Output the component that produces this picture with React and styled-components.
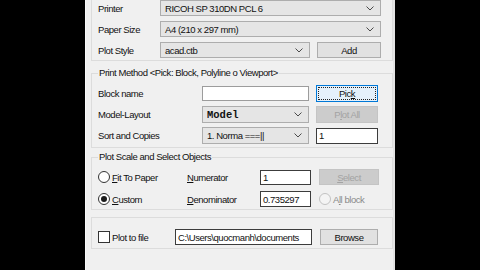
import styled, { createGlobalStyle, css } from 'styled-components';

const GlobalStyle = createGlobalStyle`
  html, body {
    margin: 0;
    padding: 0;
    background: #000;
  }
`;

const Screen = styled.div`
  height: 270px;
  display: flex;
  justify-content: center;
  background: #000;
  overflow: hidden;
`;

const Dialog = styled.div`
  width: 310px;
  height: 270px;
  box-sizing: border-box;
  overflow: hidden;
  background: #f0f0f0;
  border-left: 1px solid #f9f9f9;
  border-right: 2px solid #e4e4e4;
  padding-left: 5px;
  display: flex;
  flex-direction: column;
  font-family: 'Liberation Sans', Arial, sans-serif;
  font-size: 9.5px;
  letter-spacing: -0.45px;
  color: #111;
`;

const TopGroup = styled.div`
  margin-top: -10px;
  border: 1px solid #dcdcdc;
  padding: 9px 11px 2px 6px;
  display: grid;
  grid-template-columns: 55px 150px 64px;
  grid-auto-rows: 16px;
  column-gap: 7px;
  row-gap: 5px;
  align-items: center;
`;

const Group = styled.fieldset`
  margin: ${p => p.$gap}px 0 0;
  border: 1px solid #dcdcdc;
  padding: ${p => p.$pad};
  min-inline-size: 0;
  display: grid;
  grid-template-columns: ${p => p.$cols};
  grid-auto-rows: ${p => p.$row}px;
  row-gap: ${p => p.$rowGap}px;
  align-items: center;
`;

const Title = styled.legend`
  padding: 0 1px;
  line-height: 12px;
`;

const Label = styled.span`
  white-space: nowrap;
`;

const Key = styled.u`
  text-underline-offset: 1px;
`;

const Combo = styled.div`
  height: ${p => p.$h || 16}px;
  box-sizing: border-box;
  border: 1px solid #adadad;
  background: #e5e5e5;
  display: flex;
  align-items: center;
  justify-content: space-between;
  padding: 0 6px 0 4px;
  white-space: nowrap;
  grid-column: span ${p => p.$span || 1};
`;

const MonoValue = styled.span`
  font-family: 'Liberation Mono', 'Courier New', monospace;
  font-weight: bold;
  font-size: 10.5px;
  letter-spacing: 0;
`;

const TextBox = styled.div`
  height: ${p => p.$h || 15}px;
  box-sizing: border-box;
  border: 1px solid ${p => (p.$dark ? '#3c3c3c' : '#9c9c9c')};
  background: #fff;
  display: flex;
  align-items: center;
  padding: 0 2px;
  white-space: nowrap;
  overflow: hidden;
  grid-column: span ${p => p.$span || 1};
`;

const Button = styled.button`
  all: unset;
  height: ${p => p.$h || 16}px;
  box-sizing: border-box;
  border: 1px solid #adadad;
  background: #e1e1e1;
  display: flex;
  align-items: center;
  justify-content: center;
  font: inherit;
  letter-spacing: inherit;
  color: #111;
  ${p => p.$disabled && css`
    background: #cccccc;
    border-color: #c4c4c4;
    color: #a3a3a3;
  `}
  ${p => p.$focused && css`
    background: #e5f1fb;
    border-color: #0078d7;
    outline: 1px dotted #222;
    outline-offset: -3px;
  `}
`;

const Choice = styled.label`
  display: flex;
  align-items: center;
  gap: 2px;
  white-space: nowrap;
  color: ${p => (p.$disabled ? '#8a8a8a' : 'inherit')};
`;

const RadioDot = styled.span`
  width: 12px;
  height: 12px;
  box-sizing: border-box;
  border-radius: 50%;
  border: 1px solid ${p => (p.$disabled ? '#c2c2c2' : '#333')};
  background: ${p => (p.$disabled ? '#f4f4f4' : '#fff')};
  display: inline-flex;
  align-items: center;
  justify-content: center;
  &::after {
    content: '';
    width: 6px;
    height: 6px;
    border-radius: 50%;
    background: #1a1a1a;
    display: ${p => (p.$checked ? 'block' : 'none')};
  }
`;

const CheckBox = styled.span`
  width: 12px;
  height: 12px;
  box-sizing: border-box;
  border: 1px solid #333;
  background: #fff;
`;

const Chevron = () => (
  <svg width="8" height="5" viewBox="0 0 8 5">
    <path d="M0.5 0.5 L4 4 L7.5 0.5" fill="none" stroke="#4a4a4a" strokeWidth="1" />
  </svg>
);

export default function App() {
  return (
    <>
      <GlobalStyle />
      <Screen>
        <Dialog>
          <TopGroup>
            <Label>Printer</Label>
            <Combo $span={2}>RICOH SP 310DN PCL 6<Chevron /></Combo>
            <Label>Paper Size</Label>
            <Combo $span={2}>A4 (210 x 297 mm)<Chevron /></Combo>
            <Label>Plot Style</Label>
            <Combo>acad.ctb<Chevron /></Combo>
            <Button>Add</Button>
          </TopGroup>

          <Group $gap={6} $pad="6px 14px 3px 6px" $cols="104px 107px 7px 62px" $row={17} $rowGap={4}>
            <Title>Print Method &lt;Pick: Block, Polyline o Viewport&gt;</Title>
            <Label>Block name</Label>
            <TextBox $h={15}></TextBox>
            <span />
            <Button $h={17} $focused>Pic<Key>k</Key></Button>
            <Label>Model-Layout</Label>
            <Combo $h={17}><MonoValue>Model</MonoValue><Chevron /></Combo>
            <span />
            <Button $h={17} $disabled>P<Key>l</Key>ot All</Button>
            <Label>Sort and Copies</Label>
            <Combo $h={17}>1. Norma ===||<Chevron /></Combo>
            <span />
            <TextBox $h={16} $dark>1</TextBox>
          </Group>

          <Group $gap={3} $pad="6px 13px 2px 6px" $cols="89px 73px 51px 8px 60px" $row={16} $rowGap={6}>
            <Title>Plot Scale and Select Objects</Title>
            <Choice><RadioDot /><span><Key>F</Key>it To Paper</span></Choice>
            <Label><Key>N</Key>umerator</Label>
            <TextBox $h={15} $dark>1</TextBox>
            <span />
            <Button $disabled><Key>S</Key>elect</Button>
            <Choice><RadioDot $checked /><span><Key>C</Key>ustom</span></Choice>
            <Label><Key>D</Key>enominator</Label>
            <TextBox $h={16} $dark>0.735297</TextBox>
            <span />
            <Choice $disabled><RadioDot $disabled /><span>A<Key>l</Key>l block</span></Choice>
          </Group>

          <Group $gap={7} $pad="11px 14px 3px 6px" $cols="77px 137px 8px 58px" $row={16} $rowGap={0}>
            <Choice><CheckBox /><span>Plot to file</span></Choice>
            <TextBox $h={16} $dark>C:\Users\quocmanh\documents</TextBox>
            <span />
            <Button>Browse</Button>
          </Group>
        </Dialog>
      </Screen>
    </>
  );
}
